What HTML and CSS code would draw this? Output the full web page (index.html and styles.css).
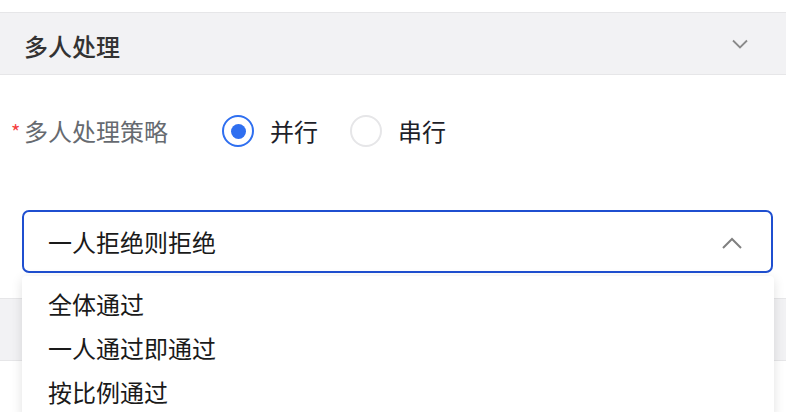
FILE: index.html
```html
<!DOCTYPE html>
<html lang="zh">
<head>
<meta charset="utf-8">
<link rel="stylesheet" href="styles.css">
</head>
<body>
<div class="page">
  <div class="section-head">
    <span class="section-title">多人处理</span>
    <svg class="chev-down" width="16" height="10" viewBox="0 0 16 10"><path d="M1 1.5 L8 8.5 L15 1.5" fill="none" stroke="#8a8a8a" stroke-width="1.8"/></svg>
  </div>
  <div class="form">
    <div class="form-row">
      <span class="req">*</span>
      <span class="label">多人处理策略</span>
      <div class="radios">
        <label class="radio"><span class="circle checked"><span class="dot"></span></span><span class="radio-text">并行</span></label>
        <label class="radio"><span class="circle"></span><span class="radio-text">串行</span></label>
      </div>
    </div>
    <div class="select-wrap">
      <div class="select">
        <span class="select-value">一人拒绝则拒绝</span>
        <svg class="chev-up" width="20" height="12" viewBox="0 0 20 12"><path d="M1 11 L10 2 L19 11" fill="none" stroke="#808080" stroke-width="2"/></svg>
      </div>
      <div class="dropdown">
        <div class="option">全体通过</div>
        <div class="option">一人通过即通过</div>
        <div class="option">按比例通过</div>
      </div>
    </div>
  </div>
  <div class="section-head next"></div>
</div>
</body>
</html>
```
FILE: styles.css
```css
html, body {
  margin: 0;
  padding: 0;
  background: #ffffff;
  font-family: "Noto Sans CJK SC", "Noto Sans", sans-serif;
}
.page {
  padding-top: 12px;
  width: 786px;
  height: 412px;
  overflow: hidden;
  box-sizing: border-box;
}
.section-head {
  height: 61px;
  background: #f2f2f4;
  border-top: 1px solid #e6e6e8;
  border-bottom: 1px solid #e6e6e8;
  display: flex;
  align-items: center;
  justify-content: space-between;
  padding: 0 38px 0 24px;
}
.section-title {
  font-size: 24px;
  line-height: 28px;
  font-weight: 500;
  color: #333333;
  padding-top: 4px;
}
.chev-down {
  display: block;
}
.form {
  padding: 34px 0 0 0;
}
.form-row {
  height: 44px;
  display: flex;
  align-items: center;
  padding-left: 11px;
}
.req {
  color: #f53f3f;
  font-size: 20px;
  width: 13px;
  line-height: 20px;
  padding-top: 2px;
}
.label {
  font-size: 24px;
  line-height: 30px;
  color: #666a70;
}
.radios {
  display: flex;
  align-items: center;
  margin-left: 54px;
  gap: 32px;
}
.radio {
  display: flex;
  align-items: center;
  gap: 16px;
}
.circle {
  width: 32px;
  height: 32px;
  box-sizing: border-box;
  border: 2px solid #e6e6e8;
  border-radius: 50%;
  display: flex;
  align-items: center;
  justify-content: center;
}
.circle.checked {
  border-color: #2f6ff0;
}
.dot {
  width: 15px;
  height: 15px;
  border-radius: 50%;
  background: #2f6ff0;
}
.radio-text {
  font-size: 24px;
  line-height: 30px;
  color: #1d2129;
}
.select-wrap {
  position: relative;
  margin: 57px 13px 0 22px;
}
.select {
  height: 63px;
  box-sizing: border-box;
  border: 2px solid #1f4fd0;
  border-radius: 7px;
  display: flex;
  align-items: center;
  justify-content: space-between;
  padding: 0 29px 0 24px;
}
.select-value {
  font-size: 24px;
  line-height: 30px;
  color: #1a1a1a;
}
.chev-up {
  display: block;
  margin-top: 2px;
}
.dropdown {
  position: absolute;
  top: calc(100% + 3px);
  left: 0;
  width: 752px;
  background: #ffffff;
  padding: 5px 0;
  box-shadow: 0 3px 12px rgba(0, 0, 0, 0.12);
  border-radius: 4px;
  z-index: 2;
}
.option {
  height: 44px;
  display: flex;
  align-items: center;
  padding-left: 26px;
  font-size: 24px;
  color: #1a1a1a;
}
.section-head.next {
  margin-top: 25px;
}
```
